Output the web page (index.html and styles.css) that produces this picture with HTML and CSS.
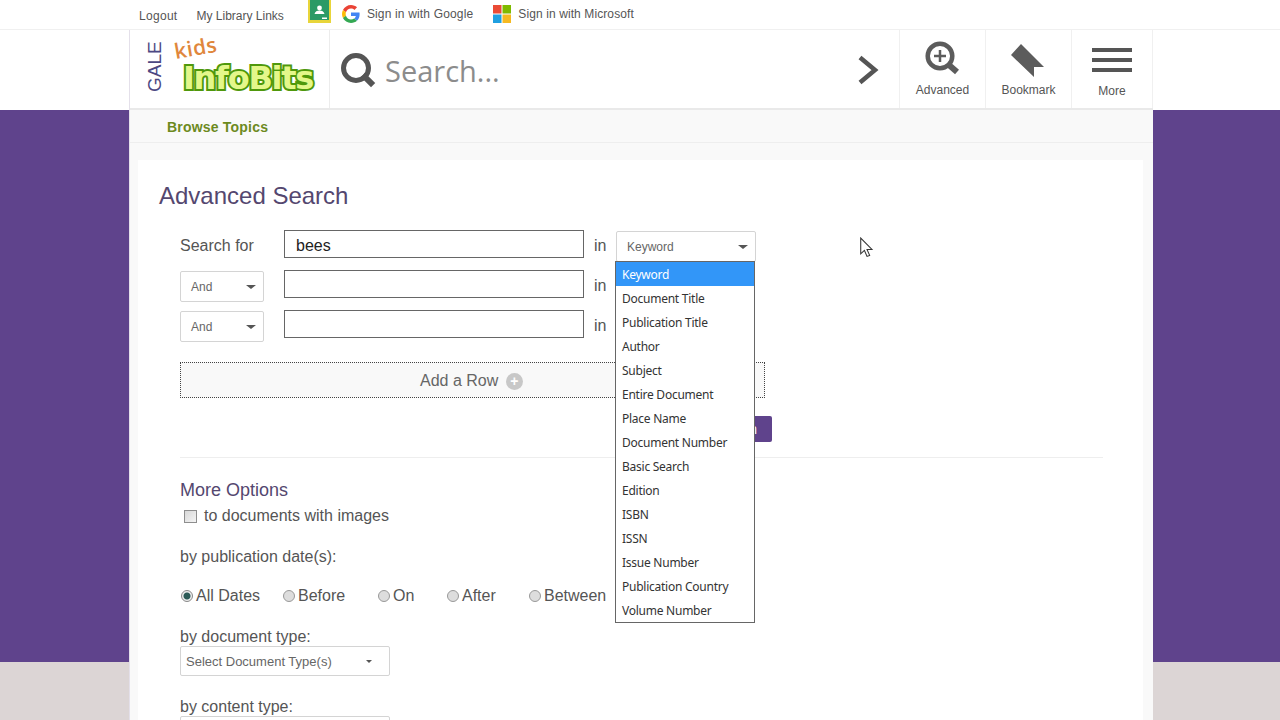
FILE: index.html
```html
<!DOCTYPE html>
<html lang="en">
<head>
    <meta charset="UTF-8">
    <meta name="viewport" content="width=device-width, initial-scale=1.0">
    <title>Advanced Search - Kids InfoBits</title>
    <link rel="stylesheet" href="styles.css">
</head>
<body>

    <!-- Top links -->
    <div class="topbar">
        <a class="top-link logout">Logout</a>
        <a class="top-link library">My Library Links</a>
        <svg class="classroom" viewBox="0 0 23 23" width="23" height="23">
            <rect width="23" height="23" fill="#e8d53a"/>
            <rect x="2" y="0" width="19" height="20" fill="#2b9a66"/>
            <circle cx="11.5" cy="8" r="2.4" fill="#fff"/>
            <path d="M6.5 14c.5-2.5 2.6-3.5 5-3.5s4.500 1 5 3.500z" fill="#fff"/>
            <rect x="14" y="17.500" width="5" height="1.500" fill="#fff"/>
        </svg>
        <svg class="google" viewBox="0 0 48 48" width="18" height="18">
            <path fill="#EA4335" d="M24 9.500c3.540 0 6.710 1.220 9.210 3.600l6.850-6.850C35.900 2.380 30.470 0 24 0 14.620 0 6.510 5.380 2.560 13.220l7.980 6.190C12.430 13.720 17.740 9.500 24 9.500z"/>
            <path fill="#4285F4" d="M46.980 24.550c0-1.570-.15-3.090-.38-4.550H24v9.020h12.940c-.58 2.960-2.260 5.480-4.780 7.180l7.730 6c4.510-4.180 7.090-10.360 7.090-17.650z"/>
            <path fill="#FBBC05" d="M10.530 28.590c-.48-1.450-.76-2.990-.76-4.590s.27-3.140.76-4.590l-7.980-6.190C.92 16.460 0 20.120 0 24c0 3.880.92 7.540 2.560 10.780l7.970-6.190z"/>
            <path fill="#34A853" d="M24 48c6.480 0 11.930-2.130 15.890-5.810l-7.730-6c-2.150 1.450-4.920 2.300-8.160 2.300-6.260 0-11.570-4.220-13.470-9.910l-7.980 6.190C6.510 42.620 14.620 48 24 48z"/>
        </svg>
        <a class="top-link sign-google">Sign in with Google</a>
        <svg class="microsoft" viewBox="0 0 18 18" width="18" height="18">
            <rect width="8.500" height="8.500" fill="#ea4b35"/>
            <rect x="9.500" width="8.500" height="8.500" fill="#7fba00"/>
            <rect y="9.500" width="8.500" height="8.500" fill="#1f9fe0"/>
            <rect x="9.500" y="9.500" width="8.500" height="8.500" fill="#f5b921"/>
        </svg>
        <a class="top-link sign-ms">Sign in with Microsoft</a>
    </div>

    <div class="page">

        <!-- Header -->
        <header class="header">
            <div class="logo">
                <span class="logo-gale">GALE</span>
                <div class="logo-name">
                    <span class="logo-kids">kids</span>
                    <span class="logo-infobits">InfoBits</span>
                </div>
            </div>
            <div class="search">
                <svg class="search-icon" viewBox="0 0 36 36" width="36" height="36">
                    <circle cx="15" cy="15" r="12.500" fill="none" stroke="#555" stroke-width="5"/>
                    <path d="M24 24l6 6" stroke="#555" stroke-width="6" stroke-linecap="square"/>
                </svg>
                <span class="search-text">Search...</span>
                <svg class="search-go" viewBox="0 0 22 30" width="22" height="30">
                    <path d="M3 2.500l15 12.500-15 12.500" fill="none" stroke="#555" stroke-width="4.500"/>
                </svg>
            </div>
            <div class="tool">
                <svg viewBox="0 0 40 36" width="40" height="36">
                    <circle cx="17" cy="15" r="12.300" fill="none" stroke="#5c5c5c" stroke-width="4.500"/>
                    <path d="M11 15h12M17 9v12" stroke="#5c5c5c" stroke-width="2.500"/>
                    <path d="M26 24l8 7" stroke="#5c5c5c" stroke-width="6"/>
                </svg>
                <span>Advanced</span>
            </div>
            <div class="tool">
                <svg viewBox="0 0 40 36" width="40" height="36">
                    <path d="M12 3l23 23H25V36L2 14z" fill="#5c5c5c"/>
                </svg>
                <span>Bookmark</span>
            </div>
            <div class="tool tool-more">
                <div class="burger"><i></i><i></i><i></i></div>
                <span>More</span>
            </div>
        </header>

        <nav class="browse"><a>Browse Topics</a></nav>

        <!-- Search form -->
        <main class="card">
            <h1 class="title">Advanced Search</h1>

            <div class="form">
                <div class="row">
                    <span class="row-label">Search for</span>
                    <div class="text-input">bees</div>
                    <span class="in">in</span>
                    <div class="select select-field">Keyword<b class="caret"></b></div>
                </div>
                <div class="row">
                    <div class="select select-op">And<b class="caret"></b></div>
                    <div class="text-input"></div>
                    <span class="in">in</span>
                </div>
                <div class="row">
                    <div class="select select-op">And<b class="caret"></b></div>
                    <div class="text-input"></div>
                    <span class="in">in</span>
                </div>

                <div class="add-row">Add a Row <span class="plus">+</span></div>
                <div class="actions"><button class="submit">Search</button></div>
                <hr class="divider">

                <h2 class="more-title">More Options</h2>
                <label class="check-line"><i class="check"></i>to documents with images</label>

                <p class="opt-label date-label">by publication date(s):</p>
                <div class="radios">
                    <label><i class="radio radio-on"></i>All Dates</label>
                    <label><i class="radio"></i>Before</label>
                    <label><i class="radio"></i>On</label>
                    <label><i class="radio"></i>After</label>
                    <label><i class="radio"></i>Between</label>
                </div>

                <p class="opt-label doc-label">by document type:</p>
                <div class="select select-wide">Select Document Type(s)<b class="caret caret-small"></b></div>

                <p class="opt-label content-label">by content type:</p>
                <div class="select select-wide"></div>
            </div>

            <!-- Open dropdown -->
            <ul class="dropdown">
                <li class="current">Keyword</li>
                <li>Document Title</li>
                <li>Publication Title</li>
                <li>Author</li>
                <li>Subject</li>
                <li>Entire Document</li>
                <li>Place Name</li>
                <li>Document Number</li>
                <li>Basic Search</li>
                <li>Edition</li>
                <li>ISBN</li>
                <li>ISSN</li>
                <li>Issue Number</li>
                <li>Publication Country</li>
                <li>Volume Number</li>
            </ul>

            <!-- Mouse pointer -->
            <svg class="pointer" viewBox="0 0 14 20" width="15" height="21">
                <path d="M1.500 1v15l3.500-3.300 2.500 5.800 2.500-1-2.500-5.600h4.700z" fill="#fff" stroke="#333" stroke-width="1"/>
            </svg>
        </main>
    </div>

</body>
</html>
```

FILE: styles.css
```css
/* General page styles */
html, body {
    margin: 0;
    padding: 0;
    height: 720px;
    overflow: hidden;
}

body {
    font-family: 'Liberation Sans', Arial, sans-serif;
    color: #555;
    background: linear-gradient(to bottom, #fff 0, #fff 110px, #5f438c 110px, #5f438c 662px, #dcd5d5 662px);
}

/* Top links */
.topbar {
    display: flex;
    align-items: flex-start;
    height: 29px;
    padding-left: 139px;
    background-color: #fff;
    border-bottom: 1px solid #f0f0f0;
    font-size: 12px;
}

.top-link {
    color: #555;
    line-height: 14px;
    white-space: nowrap;
}

.logout { margin-top: 9px; letter-spacing: 0.300px; }
.library { margin: 9px 0 0 19px; }
.classroom { margin-left: 24px; }
.google { margin: 5px 0 0 11px; }
.sign-google { margin: 7px 0 0 7px; letter-spacing: 0.160px; }
.microsoft { margin: 5px 0 0 20px; }
.sign-ms { margin: 7px 0 0 7px; letter-spacing: 0.100px; }

/* Page column */
.page {
    width: 1023px;
    margin-left: 129px;
    border-left: 1px solid #e4e0ea;
    background-color: #f9f9f9;
    height: 690px;
}

/* Header */
.header {
    display: flex;
    height: 78px;
    background-color: #fff;
    border-bottom: 2px solid #e9e9e9;
}

.logo {
    display: flex;
    width: 200px;
    flex: none;
    box-sizing: border-box;
    padding: 8px 0 0 15px;
    border-right: 1px solid #ececec;
}

.logo-gale {
    writing-mode: vertical-rl;
    transform: rotate(180deg);
    height: 52px;
    margin-top: 2px;
    text-align: left;
    font-size: 19px;
    line-height: 19px;
    color: #4c4883;
}

.logo-name {
    display: flex;
    flex-direction: column;
    margin-left: 10px;
}

.logo-kids {
    margin: 3px 0 0 2px;
    font-family: 'Open Sans', sans-serif;
    font-weight: 600;
    font-size: 21px;
    line-height: 20px;
    letter-spacing: 0.500px;
    color: #e0873c;
    transform: rotate(-10deg);
    transform-origin: left bottom;
}

.logo-infobits {
    margin: 0 0 0 9px;
    font-family: 'DejaVu Sans', sans-serif;
    font-weight: bold;
    font-size: 32px;
    line-height: 34px;
    letter-spacing: -1.300px;
    color: #e4f78a;
    -webkit-text-stroke: 4px #4f980c;
    paint-order: stroke fill;
}

.search {
    flex: 1;
    display: flex;
    align-items: center;
    padding: 0 20px 0 11px;
    border-right: 1px solid #f0f0f0;
}

.search-icon { margin-top: 4px; }

.search-text {
    flex: 1;
    margin: 3px 0 0 8px;
    font-family: 'Open Sans', sans-serif;
    font-size: 29px;
    color: #8c8c8c;
}

.search-go { margin-top: 1px; }

.tool {
    width: 86px;
    box-sizing: border-box;
    display: flex;
    flex-direction: column;
    align-items: center;
    padding-top: 11px;
    border-right: 1px solid #f0f0f0;
    font-size: 12px;
    color: #555;
}

.tool span {
    margin-top: 6px;
    line-height: 14px;
}

.tool-more {
    width: 81px;
}

.burger {
    width: 40px;
    height: 36px;
    padding-top: 7px;
    box-sizing: border-box;
}

.burger i {
    display: block;
    height: 4px;
    margin-bottom: 6px;
    background-color: #555;
}

.tool-more span {
    margin-top: 7px;
}

/* Browse bar */
.browse {
    height: 33px;
    padding-left: 37px;
    border-bottom: 1px solid #eee;
    box-sizing: border-box;
    font-size: 14px;
    font-weight: bold;
    line-height: 34px;
    letter-spacing: 0.200px;
    color: #6d8a1e;
}

/* White form card */
.card {
    position: relative;
    margin: 17px 10px 0 8px;
    padding: 22px 0 0 21px;
    height: 538px;
    overflow: hidden;
    background-color: #fff;
}

.title {
    margin: 0 0 20px;
    font-size: 24px;
    font-weight: normal;
    line-height: 28px;
    color: #54476f;
}

.form {
    margin-left: 21px;
    font-size: 16px;
}

/* Search rows */
.row {
    display: grid;
    grid-template-columns: 104px 300px 32px 140px;
    height: 40px;
}

.row-label {
    line-height: 31px;
}

.text-input {
    box-sizing: border-box;
    height: 28px;
    padding: 2px 0 0 11px;
    border: 1px solid #666;
    font-size: 16px;
    line-height: 25px;
    color: #222;
    background-color: #fff;
}

.in {
    padding-left: 10px;
    line-height: 31px;
}

.row .text-input { grid-column: 2; }
.row .in { grid-column: 3; }

.select {
    position: relative;
    box-sizing: border-box;
    height: 31px;
    padding-left: 10px;
    border: 1px solid #d4d4d4;
    border-radius: 2px;
    background-color: #fff;
    font-size: 12px;
    line-height: 30px;
    color: #666;
}

.select-field { margin-top: 1px; }
.select-op {
    width: 84px;
    margin-top: 1px;
}

.select-wide {
    width: 210px;
    height: 30px;
    margin-top: -1px;
    padding-left: 5px;
    font-size: 13px;
    line-height: 30px;
}

.caret {
    position: absolute;
    right: 7px;
    top: 13px;
    border-left: 5px solid transparent;
    border-right: 5px solid transparent;
    border-top: 4px solid #555;
}

.caret-small {
    right: 17px;
    border-left-width: 3px;
    border-right-width: 3px;
    border-top-width: 3px;
}

/* Add row */
.add-row {
    box-sizing: border-box;
    width: 585px;
    height: 36px;
    margin-top: 12px;
    padding-left: 239px;
    border: 1px dotted #444;
    background-color: #f9f9f9;
    line-height: 35px;
    color: #666;
}

.plus {
    display: inline-block;
    width: 17px;
    height: 17px;
    margin-left: 3px;
    border-radius: 50%;
    background-color: #c8c8c8;
    color: #fff;
    font-size: 14px;
    font-weight: bold;
    line-height: 16px;
    text-align: center;
}

.actions {
    display: flex;
    justify-content: flex-end;
    width: 592px;
    margin-top: 18px;
}

.submit {
    width: 84px;
    height: 26px;
    padding: 0 15px 0 0;
    border: 0;
    border-radius: 2px;
    background-color: #5f438c;
    color: #fff;
    font-family: inherit;
    font-size: 14px;
    text-align: right;
}

.divider {
    width: 923px;
    margin: 15px 0 0;
    border: 0;
    border-top: 1px solid #eee;
}

/* More options */
.more-title {
    margin: 22px 0 0;
    font-size: 18px;
    font-weight: normal;
    line-height: 20px;
    color: #54476f;
}

.check-line {
    display: flex;
    align-items: center;
    margin-top: 6px;
    padding-left: 4px;
    line-height: 20px;
}

.check {
    width: 11px;
    height: 11px;
    margin-right: 7px;
    border: 1px solid #8e8e8e;
    background: linear-gradient(135deg, #d8d8d8, #f4f4f4);
}

.opt-label {
    margin: 0;
    line-height: 20px;
}

.date-label { margin-top: 21px; }
.doc-label { margin-top: 21px; }
.content-label { margin-top: 21px; }

.radios {
    display: grid;
    grid-template-columns: 102px 95px 69px 82px auto;
    margin: 19px 0 0 1px;
    line-height: 20px;
}

.radios label {
    display: flex;
    align-items: center;
}

.radio {
    width: 10px;
    height: 10px;
    margin-right: 3px;
    border: 1px solid #999;
    border-radius: 50%;
    background: #ddd;
}

.radio-on {
    background: radial-gradient(circle, #2c5b57 0, #2c5b57 3px, #eee 4px);
    border-color: #888;
}

/* Open dropdown list, sits on top of the form */
.dropdown {
    position: absolute;
    left: 477px;
    top: 101px;
    width: 138px;
    margin: 0;
    padding: 0;
    list-style: none;
    border: 1px solid #666;
    background-color: #fff;
    font-family: 'Noto Sans', sans-serif;
    font-size: 12px;
    letter-spacing: -0.250px;
    color: #333;
}

.dropdown li {
    height: 23px;
    padding: 1px 0 0 6px;
    line-height: 23px;
    white-space: nowrap;
}

.dropdown .current {
    background-color: #3296f8;
    color: #fff;
}

.pointer {
    position: absolute;
    left: 721px;
    top: 77px;
}
```
